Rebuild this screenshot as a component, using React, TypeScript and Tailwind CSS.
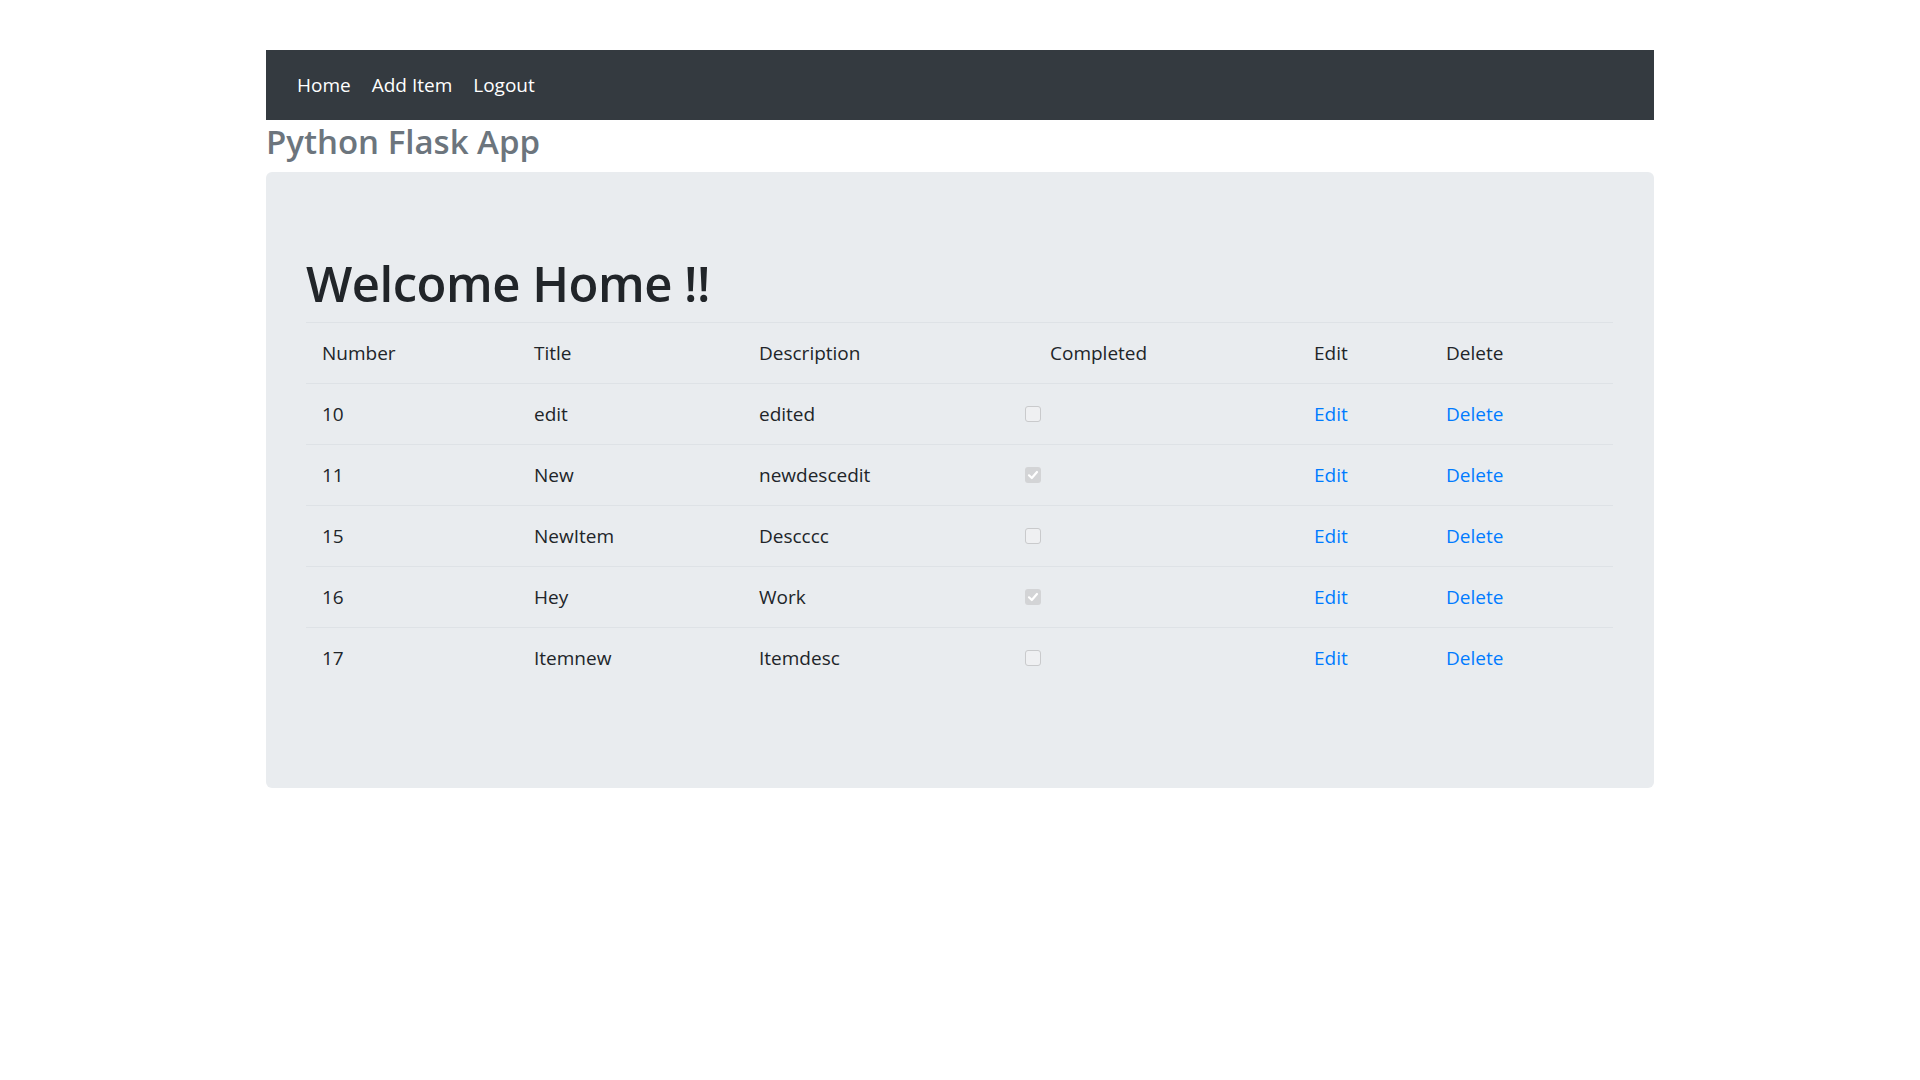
import React from 'react';

type Item = {
    id: number;
    title: string;
    description: string;
    completed: boolean;
};

const items: Item[] = [
    { id: 10, title: 'edit', description: 'edited', completed: false },
    { id: 11, title: 'New', description: 'newdescedit', completed: true },
    { id: 15, title: 'NewItem', description: 'Descccc', completed: false },
    { id: 16, title: 'Hey', description: 'Work', completed: true },
    { id: 17, title: 'Itemnew', description: 'Itemdesc', completed: false },
];

const cols = 'grid grid-cols-[212px_225px_291px_264px_132px_183px]';

const Checkbox: React.FC<{ checked: boolean }> = ({ checked }) =>
    checked ? (
        <span className="flex h-4 w-4 items-center justify-center rounded-[3px] bg-[#d3d4d6]">
            <svg width="12" height="12" viewBox="0 0 12 12" fill="none">
                <path d="M2 6.3 4.8 9 10 3" stroke="#fff" strokeWidth="2.2" strokeLinecap="round" strokeLinejoin="round" />
            </svg>
        </span>
    ) : (
        <span className="block h-4 w-4 rounded-[3px] border border-[#c9cacc] bg-[#eff0f2]" />
    );

export default function App() {
    return (
        <div className="min-h-screen bg-white font-['Open_Sans',sans-serif] text-[#212529]">
            <div className="mx-auto w-[1388px] pt-[50px]">
                {/* Navbar */}
                <nav className="flex h-[70px] items-center gap-[21px] bg-[#343a40] px-[31px] text-[19px] text-white">
                    <a href="#">Home</a>
                    <a href="#">Add Item</a>
                    <a href="#">Logout</a>
                </nav>

                <h2 className="mb-[10px] h-[42px] pt-[1px] text-[33px] leading-[42px] font-semibold text-[#6c757d]">Python Flask App</h2>

                {/* Jumbotron */}
                <div className="rounded-[6px] bg-[#e9ecef] px-10 pt-[81px] pb-[100px]">
                    <h1 className="mb-[9px] text-[49px] leading-[60px] font-semibold tracking-[-0.5px]">Welcome Home !!</h1>

                    <div className="w-[1307px] text-[19px]">
                        <div className={`${cols} h-[61px] items-center border-t border-[#dee2e6]`}>
                            <div className="px-4">Number</div>
                            <div className="px-4">Title</div>
                            <div className="px-4">Description</div>
                            <div className="px-4">Completed</div>
                            <div className="px-4">Edit</div>
                            <div className="px-4">Delete</div>
                        </div>
                        {items.map((item) => (
                            <div key={item.id} className={`${cols} h-[61px] items-center border-t border-[#dee2e6]`}>
                                <div className="px-4">{item.id}</div>
                                <div className="px-4">{item.title}</div>
                                <div className="px-4">{item.description}</div>
                                <div className="-ml-[9px] flex items-center">
                                    <Checkbox checked={item.completed} />
                                </div>
                                <div className="px-4">
                                    <a href="#" className="text-[#007bff]">Edit</a>
                                </div>
                                <div className="px-4">
                                    <a href="#" className="text-[#007bff]">Delete</a>
                                </div>
                            </div>
                        ))}
                    </div>
                </div>
            </div>
        </div>
    );
}
